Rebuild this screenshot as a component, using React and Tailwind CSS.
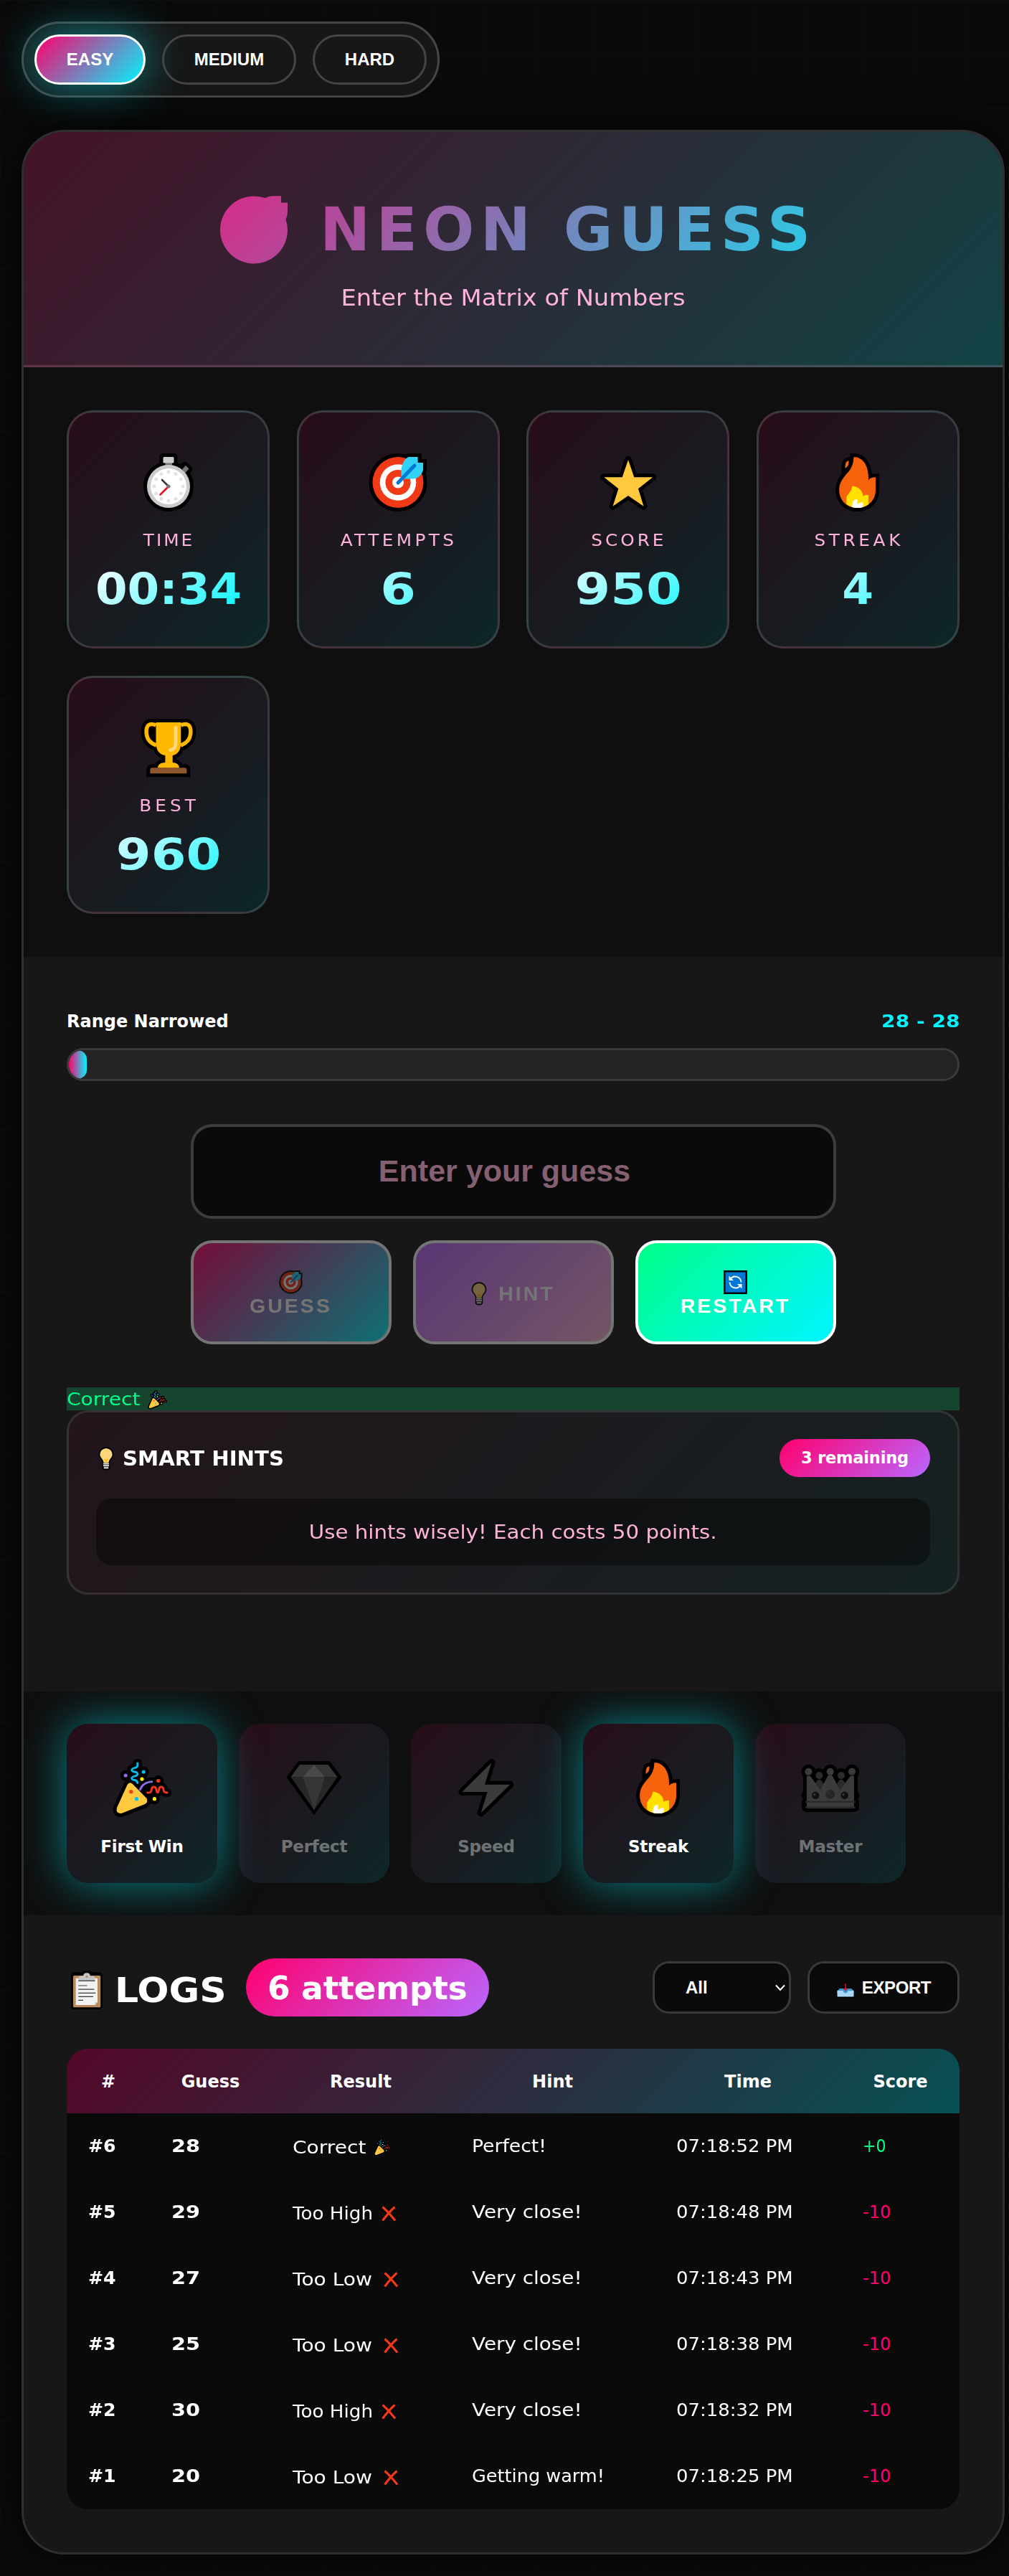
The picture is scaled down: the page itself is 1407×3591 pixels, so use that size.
import React from "react";

function Icon({ size = 82, className = "", outline = 10, shape, children }) {
  return (
    <svg width={size} height={size} viewBox="0 0 82 82" className={`shrink-0 ${className}`}>
      <g fill="#000" stroke="#000" strokeWidth={outline} strokeLinejoin="round" strokeLinecap="round">
        {shape}
      </g>
      {children}
    </svg>
  );
}

function Stopwatch() {
  const dots = Array.from({ length: 12 }, (_, i) => (i * Math.PI) / 6);
  const shape = (
    <>
      <circle cx="41" cy="46" r="30" />
      <path d="M33.5 5h15v9h-15z" />
      <path d="M58 21l6-4 5 5-5 6z" />
    </>
  );
  return (
    <Icon shape={shape}>
      <path d="M36.5 12h9.5v5h-9.5z" fill="#777" />
      <rect x="33.5" y="5" width="15" height="8.5" rx="1.5" fill="#ccc" />
      <path d="M60 22l5-5 4.5 4.5-5.5 6z" fill="#777" />
      <circle cx="41" cy="46" r="30" fill="#cbcbcb" />
      <circle cx="41" cy="46" r="25" fill="#fff" />
      {dots.map((a) => (
        <circle key={a} cx={41 + 20 * Math.sin(a)} cy={46 - 20 * Math.cos(a)} r="2.5" fill="#e3e3e3" />
      ))}
      <path d="M41 46l-9-9" stroke="#3a3a3a" strokeWidth="2.6" strokeLinecap="round" />
      <path d="M41 46L29.5 57.5" stroke="#e81224" strokeWidth="2.6" strokeLinecap="round" />
      <circle cx="41" cy="46" r="2.6" fill="#777" />
    </Icon>
  );
}

const FLIGHT = "M45.4 35.5V24C46 15 51 6 56 5h12.6v8h7.5v10c-2 7-7 12.5-15 12.5z";

function Target({ size, className }) {
  const shape = (
    <>
      <circle cx="41" cy="40.5" r="35.5" />
      <path d={FLIGHT} strokeLinejoin="miter" />
    </>
  );
  return (
    <Icon size={size} className={className} shape={shape}>
      <circle cx="41" cy="40.5" r="35.5" fill="#f03a17" />
      <circle cx="41" cy="40.5" r="25.3" fill="#fff" />
      <circle cx="41" cy="40.5" r="17.6" fill="#f03a17" />
      <circle cx="41" cy="40.5" r="8" fill="#fff" />
      <path d={FLIGHT} fill="#31d2f7" />
      <path d="M41 41L64 17" stroke="#0078d7" strokeWidth="5" strokeLinecap="round" />
    </Icon>
  );
}

function Star() {
  const d = "M41 9L49.3 33.3H75.2L55 49.3 62.5 73.7 41 59 19.5 73.7 27.4 49.3 7.3 33.3H32.7Z";
  return (
    <Icon shape={<path d={d} />}>
      <path d={d} fill="#ffc83d" />
    </Icon>
  );
}

function Fire() {
  const main =
    "M35.4 5C48 5 57 17 56 37.3C58 34.5 61 33.3 66 33.3V51.3C66 65 56 76 40.6 76C25 76 15.2 65 15.2 51.3C15.2 42 19 36 26 28C32 22 35.5 14 35.4 5Z";
  const spark = "M28.4 10.3C24.5 11 23.5 14 23.5 20.7C27 19.5 29 16 28.4 10.3Z";
  const shape = (
    <>
      <path d={main} strokeLinejoin="miter" />
      <path d={spark} strokeLinejoin="miter" />
    </>
  );
  return (
    <Icon shape={shape}>
      <path d={main} fill="#f7630c" />
      <path d={spark} fill="#f7630c" />
      <path
        d="M33.2 45.7C42 46 48 52 48.5 59.7C50.5 58.3 53 58 56 58V71C51.5 74.5 46 76 40.6 76C35 76 29 74 25.3 70.5V61.3C27 56 33 53 33.2 45.7Z"
        fill="#ffe000"
      />
      <path d="M40.6 63.7C36 64 33.2 66 33.2 75C38 76.3 44 76.3 48.5 75V68.3C45 68.3 43 69 40.6 71Z" fill="#fff" />
    </Icon>
  );
}

function Trophy() {
  const cup =
    "M23.5 5H58.3V34C58.3 44 53 50.5 46.7 51V61C52 61 56 64 56 68.5H26C26 64 30 61 36.4 61V51C29 50.5 23.5 44 23.5 34Z";
  const handles = "M23.5 9C12 4 9 12 10.5 22C11.5 30 17 34.5 24 37M58.3 9C70 4 73 12 71.5 22C70.5 30 65 34.5 58 37";
  const base = "M15.4 71q0-2.7 3-2.7h45q3 0 3 2.7v5.3h-51z";
  const shape = (
    <>
      <path d={cup} />
      <path d={handles} strokeWidth="15" />
      <path d={base} strokeLinejoin="miter" />
    </>
  );
  return (
    <Icon shape={shape}>
      <path d={handles} fill="none" stroke="#ffb900" strokeWidth="5.5" />
      <path d={cup} fill="#ffb900" />
      <path d="M51 12.5V34Q51 42.5 43.5 43.5" fill="none" stroke="#ffd679" strokeWidth="5" strokeLinecap="round" />
      <path d={base} fill="#8e562e" />
    </Icon>
  );
}

function Party({ size, className }) {
  const cone = "M20.5 36Q23.5 31 28 35L47.5 55Q50 60 45 63L12 76Q4 76 6 68Z";
  const blue = "M34.7 6v3q0 3-4 3.5q-4 1-4 3t4 2.5q4 .5 4 3t-4 3q-4 1-4 3t4 2.5q4 .5 4 4";
  const red = "M48.5 47C53 47.500 54 46 54.300 43C54.800 37.500 60.500 37.500 61 43C61.300 48 64 48 64.500 43C65 37.500 70.500 37.500 71 43C71.300 46 73 47 76.200 47";
  const arc = "M37.8 44Q42 32 56 31.7";
  const dots = [
    [18.2, 23, "#886ce4"],
    [43.2, 18, "#00bcf2"],
    [41, 28, "#fff100"],
    [63.7, 30.5, "#f03a17"],
    [58.4, 55.7, "#fff100"],
  ];
  const shape = (
    <>
      <path d={cone} />
      <path d={blue} strokeWidth="13" />
      <path d={red} strokeWidth="12" />
      <path d={arc} strokeWidth="12" />
      {dots.map(([x, y]) => (
        <circle key={x} cx={x} cy={y} r="2.5" />
      ))}
    </>
  );
  return (
    <Icon size={size} className={className} shape={shape}>
      <path d={arc} fill="none" stroke="#886ce4" strokeWidth="2.8" />
      <path d={cone} fill="#ffc83d" />
      <path d={blue} fill="none" stroke="#00bcf2" strokeWidth="2.8" strokeLinecap="round" />
      <path d={red} fill="none" stroke="#f03a17" strokeWidth="2.8" strokeLinecap="round" />
      {dots.map(([x, y, c]) => (
        <circle key={x} cx={x} cy={y} r="2.6" fill={c} />
      ))}
      <circle cx="25.8" cy="45.7" r="2.6" fill="#f03a17" />
      <circle cx="33.4" cy="55.7" r="2.6" fill="#00bcf2" />
    </Icon>
  );
}

function Diamond() {
  return (
    <Icon outline={0} shape={<path d="M19.3 3H62.6L79.5 25.3 40.9 78 2.3 25.3Z" />}>
      <path d="M21 8H60.5L73.5 25.3H8.5Z" fill="#363636" />
      <path d="M8.5 25.3H73.5L41 71.5Z" fill="#272727" />
      <path d="M41 8L25.5 25.3H56Z" fill="#4a4a4a" />
      <path d="M25.5 25.3H56L41 71.5Z" fill="#363636" />
    </Icon>
  );
}

function Bolt() {
  const d = "M48.4 5.3L39 35.7H74.3L33.7 75.3 42.6 46H7.4Z";
  return (
    <Icon shape={<path d={d} />}>
      <path d={d} fill="#3b3b3b" />
    </Icon>
  );
}

function Crown() {
  const body = "M7.9 69V23.5H12.8L26.8 43.3 38 22.5H43L54.5 43.3 69 23.5H73.9V69Z";
  const shape = (
    <>
      <path d={body} />
      <path d="M20 40L25.4 27 31 40M50 40L56 27 61 40" />
      {[10.4, 40.7, 71].map((x) => (
        <circle key={x} cx={x} cy="17.7" r="5" />
      ))}
      {[25.4, 56].map((x) => (
        <circle key={x} cx={x} cy="23" r="5" />
      ))}
      <path d="M6 60H76V68H6Z" />
      <circle cx="7" cy="51" r="1.5" />
      <circle cx="75" cy="51" r="1.5" />
    </>
  );
  return (
    <Icon shape={shape}>
      {[25.4, 56].map((x) => (
        <g key={x} fill="#2b2b2b">
          <circle cx={x} cy="23" r="5" />
          <path d={`M${x - 6} 35Q${x} 22 ${x + 6} 35L${x} 46Z`} />
        </g>
      ))}
      <path d={body} fill="#3b3b3b" />
      {[10.4, 40.7, 71].map((x) => (
        <circle key={x} cx={x} cy="17.7" r="5" fill="#3b3b3b" />
      ))}
      <path d="M5.5 59.7H76M5.5 67.5H76" stroke="#272727" strokeWidth="2" />
      <circle cx="20.2" cy="50.7" r="5.2" fill="#111" />
      <circle cx="60.7" cy="50.7" r="5.2" fill="#111" />
      <circle cx="40.5" cy="49.2" r="6.4" fill="#262626" />
      <circle cx="18.6" cy="49.6" r="1.4" fill="#444" />
      <circle cx="59" cy="49.6" r="1.4" fill="#444" />
      <circle cx="38.6" cy="47.6" r="1.8" fill="#2f2f2f" />
    </Icon>
  );
}

function Bulb({ className = "" }) {
  return (
    <svg width="22" height="33" viewBox="0 0 22 33" className={`shrink-0 ${className}`}>
      <path d="M11 0A10.5 10.5 0 0 1 21.5 10.5C21.5 15.5 16.5 17.5 16.3 22V29.5Q16 32.5 11 32.5T5.7 29.5V22C5.5 17.5.5 15.5.5 10.5A10.5 10.5 0 0 1 11 0Z" fill="#000" />
      <path d="M11 2A8.7 8.7 0 0 1 19.7 10.7C19.5 15 15 17 14.4 22H7.6C7 17 2.5 15 2.3 10.7A8.7 8.7 0 0 1 11 2Z" fill="#ffd67a" />
      <path d="M8.5 16.5L10.3 18.5V22.5M13.5 16.5L11.7 18.5V22.5" stroke="#ffb900" strokeWidth="1.3" fill="none" />
      <path d="M7.7 23.5H14.3M7.7 26.3H14.3M8.5 29.2H13.5" stroke="#e6e6e6" strokeWidth="1.9" strokeLinecap="round" />
    </svg>
  );
}

function Refresh() {
  return (
    <svg width="33" height="33" viewBox="0 0 33 33">
      <path d="M0 0H33V33H0Z" fill="#000" />
      <path d="M2.500 2.500H30.500V30.500H2.500Z" fill="#0078d7" />
      <g fill="none" stroke="#fff" strokeWidth="1.800">
        <path d="M24.5 16.500A8.300 8.300 0 0 0 9.500 12" />
        <path d="M8.5 16.500A8.300 8.300 0 0 0 23.5 21" />
      </g>
      <path d="M7.500 7.500V14H14Z" fill="#fff" />
      <path d="M25.500 25.500V19H19Z" fill="#fff" />
    </svg>
  );
}

function Clipboard() {
  return (
    <svg width="44" height="54" viewBox="0 0 44 54" className="shrink-0">
      <path d="M4 2.5H14.5Q17 0 22 0T29.5 2.5H40Q44 3 44 7V50Q44 54 40 54H4Q0 54 0 50V7Q0 3 4 2.5Z" fill="#000" />
      <rect x="3" y="7" width="38.2" height="44.3" rx="1.5" fill="#ba8c5d" />
      <path d="M6.7 10.7H37V44L33.5 48H6.7Z" fill="#f2f2f2" />
      <path d="M37 44H33.5V48Z" fill="#c8c8c8" />
      <path d="M10.3 10Q10.3 8 13 7.7H17Q17.5 3.3 22 3.3T27 7.7H31Q33.5 8 33.5 10V14H10.3Z" fill="#c4c4c4" />
      <circle cx="22" cy="8.5" r="1.7" fill="#ba8c5d" />
      <path d="M10.3 14.3H33.5M10.3 21H22.5M10.3 26.2H32.5M10.3 31.4H34.3M10.3 36.4H31M10.3 41.4H17" stroke="#3a3a3a" strokeWidth="1.2" />
    </svg>
  );
}

function Inbox() {
  return (
    <svg width="26" height="22" viewBox="0 0 26 22" className="mt-[6px] shrink-0">
      <path d="M2 9Q7 7 10 7V1H16V7Q20 7 24 9L26 12V21Q25 22 24 22H2Q0 22 0 20V12Z" fill="#000" />
      <path d="M1.5 12L5 9H21L24.5 12V16H1.5Z" fill="#3a96dd" />
      <path d="M1.5 12H9.5Q10.5 15.5 13 15.5T16.5 12H24.5V19.5Q24.5 20.5 23.5 20.5H2.5Q1.5 20.5 1.5 19.5Z" fill="#a9d8f5" />
      <path d="M13 2V11M10.5 9L13 11.5 15.5 9" stroke="#e81224" strokeWidth="1.5" fill="none" />
    </svg>
  );
}

function Cross() {
  return (
    <svg width="23" height="22" viewBox="0 0 23 22" className="shrink-0">
      <path d="M2.5 1.5Q10 8 20 20.5M19.5 1.5Q12 8 2.5 20.5" stroke="#000" strokeWidth="5.5" fill="none" />
      <path d="M2.5 1.5Q10 8 20 20.5M19.5 1.5Q12 8 2.5 20.5" stroke="#f03a17" strokeWidth="3.3" fill="none" />
    </svg>
  );
}

function HeroMark() {
  return (
    <svg width="94" height="95" viewBox="0 0 94 95" className="shrink-0">
      <defs>
        <linearGradient id="hero" x1="0" y1="0" x2="1" y2="1">
          <stop offset="0" stopColor="#d62c88" />
          <stop offset="1" stopColor="#b24a9a" />
        </linearGradient>
      </defs>
      <path
        d="M47 0.5Q55 .5 62.5 3Q68 .3 73 .3H85V9.5H94V22Q94 28 91.5 33Q94 40 94 48A47 47 0 1 1 47 .5Z"
        fill="url(#hero)"
      />
    </svg>
  );
}

const stats = [
  { label: "TIME", value: "00:34", icon: <Stopwatch />, cls: "tracking-[2.7px]", val: "scale-x-[1.07]" },
  { label: "ATTEMPTS", value: "6", icon: <Target />, cls: "tracking-[4px]", val: "scale-x-[1.19]" },
  { label: "SCORE", value: "950", icon: <Star />, cls: "tracking-[3.6px]", val: "scale-x-[1.19]" },
  { label: "STREAK", value: "4", icon: <Fire />, cls: "tracking-[4.2px]", val: "scale-x-[1.05]" },
  { label: "BEST", value: "960", icon: <Trophy />, cls: "tracking-[4.6px]", val: "scale-x-[1.17]" },
];

const badges = [
  { name: "First Win", icon: <Party />, on: true },
  { name: "Perfect", icon: <Diamond />, on: false },
  { name: "Speed", icon: <Bolt />, on: false },
  { name: "Streak", icon: <Fire />, on: true },
  { name: "Master", icon: <Crown />, on: false },
];

const logs = [
  { n: 6, guess: 28, result: "Correct", hint: "Perfect!", time: "07:18:52 PM", score: "+0" },
  { n: 5, guess: 29, result: "Too High", hint: "Very close!", time: "07:18:48 PM", score: "-10" },
  { n: 4, guess: 27, result: "Too Low", hint: "Very close!", time: "07:18:43 PM", score: "-10" },
  { n: 3, guess: 25, result: "Too Low", hint: "Very close!", time: "07:18:38 PM", score: "-10" },
  { n: 2, guess: 30, result: "Too High", hint: "Very close!", time: "07:18:32 PM", score: "-10" },
  { n: 1, guess: 20, result: "Too Low", hint: "Getting warm!", time: "07:18:25 PM", score: "-10" },
];

const hintStretch = {
  "Perfect!": "scale-x-[1.11]",
  "Very close!": "scale-x-[1.16]",
  "Getting warm!": "scale-x-[1.065]",
};

const resultStretch = {
  Correct: "w-[113px] scale-x-[1.17]",
  "Too High": "w-[123px] scale-x-[1.09]",
  "Too Low": "w-[126px] scale-x-[1.17]",
};

const cols = "grid grid-cols-[116px_169px_250px_285px_260px_165px] items-center";
const action =
  "flex h-[145px] w-[280px] items-center justify-center rounded-[30px] border-4 border-white text-[28.5px] leading-[33px] font-bold tracking-[3px] text-white font-['Liberation_Sans',Arial,sans-serif]";

function Difficulty() {
  const base = "h-[70px] rounded-full border-[3px] text-center text-[24px] leading-[64px] font-bold text-white";
  return (
    <nav className="flex h-[106px] w-[583px] items-center gap-[23px] rounded-full border-[3px] border-[#454545] bg-[#171717] pl-[15px] font-['Liberation_Sans',Arial,sans-serif]">
      <button className={`${base} w-[155px] border-white bg-[linear-gradient(135deg,#ff006e,#00f5ff)] shadow-[0_0_60px_rgba(0,245,255,0.5)]`}>
        EASY
      </button>
      <button className={`${base} w-[187px] border-[#454545]`}>MEDIUM</button>
      <button className={`${base} w-[159px] border-[#454545]`}>HARD</button>
    </nav>
  );
}

export default function App() {
  return (
    <div className="h-[3591px] w-[1407px] overflow-hidden bg-[#0a0a0a] bg-[linear-gradient(rgba(0,245,255,0.035)_1px,transparent_1px),linear-gradient(90deg,rgba(255,0,110,0.035)_1px,transparent_1px)] bg-size-[75px_75px] p-[30px] font-['DejaVu_Sans',sans-serif] text-white">
      <Difficulty />

      <main className="mt-[45px] h-[3380px] w-[1371px] overflow-hidden rounded-[60px] border-[3px] border-[#2f2f2f] bg-[#171717] shadow-[0_0_60px_rgba(0,0,0,0.7)]">
        <header className="h-[328px] border-b-[3px] border-white/15 bg-[linear-gradient(135deg,rgba(255,0,110,0.2),rgba(0,245,255,0.2))] px-[45px] pt-[89px] text-center">
          <h1 className="flex items-center gap-[45px] bg-[linear-gradient(135deg,#ff006e,#00f5ff)] bg-clip-text pl-[229px] text-[84px] leading-[95px] font-bold tracking-[8.2px] whitespace-nowrap text-transparent">
            <HeroMark />
            <span>NEON GUESS</span>
          </h1>
          <p className="mt-[27px] scale-x-[1.07] text-[31.5px] leading-[40px] text-[#ffb3d9]">Enter the Matrix of Numbers</p>
        </header>

        <section className="grid h-[822px] grid-cols-4 content-start gap-[37.5px] bg-[#0f0f0f] p-[60px]">
          {stats.map((s) => (
            <div
              key={s.label}
              className="flex h-[332px] flex-col items-center rounded-[37px] border-[3px] border-white/15 bg-[linear-gradient(135deg,rgba(255,0,110,0.1),rgba(0,245,255,0.1))] px-[37.5px] pt-[57px]"
            >
              {s.icon}
              <div className={`mt-[24px] scale-x-110 pl-[2px] text-[22.5px] leading-[30px] text-[#ffb3d9] ${s.cls}`}>{s.label}</div>
              <div
                className={`mt-[23px] w-full bg-[linear-gradient(135deg,#fff,#00f5ff)] bg-clip-text text-center text-[60px] leading-[60px] font-bold text-transparent ${s.val}`}
              >
                {s.value}
              </div>
            </div>
          ))}
        </section>

        <section className="h-[1024px] px-[60px] pt-[75px]">
          <div className="flex justify-between text-[24px] leading-[30px] font-bold">
            <span>Range Narrowed</span>
            <span className="origin-right scale-x-[1.17] text-[#00f5ff]">28 - 28</span>
          </div>
          <div className="mt-[22px] h-[46px] overflow-hidden rounded-[23px] border-[3px] border-[#3a3a3a] bg-[#232323]">
            <div className="h-full w-[2%] rounded-[20px] bg-[linear-gradient(90deg,#ff006e,#00f5ff)]" />
          </div>

          <div className="mx-auto mt-[60px] flex h-[132px] w-[900px] items-center justify-center rounded-[30px] border-4 border-[#3d3d3d] bg-[#0a0a0a] pr-[24px] pb-[2px] font-['Liberation_Sans',Arial,sans-serif] text-[43px] font-bold text-[#855f72]">
            Enter your guess
          </div>

          <div className="mx-auto mt-[30px] flex w-[900px] justify-between">
            <button className={`${action} flex-col bg-[linear-gradient(135deg,#ff006e,#00f5ff)] pt-[4px] opacity-40`}>
              <Target size={33} />
              <span>GUESS</span>
            </button>
            <button className={`${action} gap-[16px] bg-[linear-gradient(135deg,#b967ff,#ffb3d9)] pt-[3px] opacity-40`}>
              <Bulb />
              <span>HINT</span>
            </button>
            <button className={`${action} flex-col bg-[linear-gradient(135deg,#00ff88,#00f5ff)] pt-[4px]`}>
              <Refresh />
              <span>RESTART</span>
            </button>
          </div>

          <div className="mt-[60px] flex h-[32px] items-center bg-[#15452f] pt-[2px] text-[24px] leading-[30px] text-[#00ff88]">
            <span className="w-[113px] origin-left scale-x-[1.17]">Correct</span>
            <Party size={27} />
          </div>

          <div className="h-[257px] rounded-[30px] border-[3px] border-white/10 bg-[linear-gradient(135deg,rgba(255,0,110,0.05),rgba(0,245,255,0.05))] px-[38px] pt-[37px]">
            <div className="flex h-[53px] items-center justify-between font-bold">
              <div className="flex items-center gap-[12px] pt-[2px] pl-[3px]">
                <Bulb />
                <span className="origin-left scale-x-[1.045] text-[28px]">SMART HINTS</span>
              </div>
              <span className="w-[210px] rounded-full bg-[linear-gradient(135deg,#ff006e,#b967ff)] text-center text-[22.5px] leading-[53px] tracking-[-0.2px]">
                3 remaining
              </span>
            </div>
            <div className="mt-[30px] rounded-[22px] bg-black/40 text-center text-[27px] leading-[93px] text-[#ffb3d9]">
              <span className="inline-block scale-x-[1.085]">Use hints wisely! Each costs 50 points.</span>
            </div>
          </div>
        </section>

        <section className="flex h-[312px] gap-[30px] overflow-hidden bg-[#0f0f0f] px-[60px] pt-[45px]">
          {badges.map((b) => (
            <div
              key={b.name}
              className={`flex h-[222px] w-[210px] flex-col items-center rounded-[30px] bg-[linear-gradient(135deg,rgba(255,0,110,0.1),rgba(0,245,255,0.1))] pt-[49px] ${
                b.on ? "shadow-[0_0_60px_rgba(0,245,255,0.5)]" : ""
              }`}
            >
              {b.icon}
              <span className={`mt-[25px] text-[23px] leading-[30px] font-bold tracking-[-0.2px] ${b.on ? "text-white" : "text-white/40"}`}>
                {b.name}
              </span>
            </div>
          ))}
        </section>

        <section className="px-[60px] pt-[60px]">
          <div className="flex h-[81px] items-center">
            <div className="ml-[6px] flex items-center pt-[7px]">
              <Clipboard />
              <span className="ml-[17px] w-[183px] origin-left scale-x-[1.085] text-[48px] leading-[54px] font-bold">LOGS</span>
            </div>
            <span className="w-[339px] rounded-full bg-[linear-gradient(135deg,#ff006e,#b967ff)] pt-[3px] text-center text-[45px] leading-[78px] font-bold">
              6 attempts
            </span>
            <div className="ml-auto flex gap-[23px] font-['Liberation_Sans',Arial,sans-serif] text-[24px] font-bold">
              <div className="flex h-[73px] w-[193px] items-center justify-between rounded-[23px] border-[3px] border-[#3a3a3a] bg-[#0a0a0a] pr-[5px] pl-[43px]">
                <span>All</span>
                <svg width="14" height="10" viewBox="0 0 14 10">
                  <path d="M1 1.5L7 8 13 1.5" stroke="#fff" strokeWidth="2" fill="none" />
                </svg>
              </div>
              <button className="flex h-[73px] w-[212px] items-center justify-center gap-[10px] rounded-[23px] border-[3px] border-[#3a3a3a] bg-[#0a0a0a]">
                <Inbox />
                <span className="tracking-[-0.4px]">EXPORT</span>
              </button>
            </div>
          </div>

          <div className="mt-[45px] overflow-hidden rounded-[30px] bg-[#0a0a0a] text-[24px]">
            <div className={`${cols} h-[90px] bg-[linear-gradient(135deg,rgba(255,0,110,0.3),rgba(0,245,255,0.3))] pt-[2px] text-center font-bold`}>
              <span>#</span>
              <span>Guess</span>
              <span>Result</span>
              <span>Hint</span>
              <span>Time</span>
              <span>Score</span>
            </div>
            {logs.map((r) => (
              <div key={r.n} className={`${cols} h-[92px] *:ml-[30px]`}>
                <span className="origin-left scale-x-[1.05] font-bold">#{r.n}</span>
                <span className="origin-left scale-x-[1.2] font-bold">{r.guess}</span>
                <div className="flex items-center pt-[3px]">
                  <span className={`origin-left ${resultStretch[r.result]}`}>{r.result}</span>
                  {r.result === "Correct" ? <Party size={25} /> : <Cross />}
                </div>
                <span className={`origin-left ${hintStretch[r.hint]}`}>{r.hint}</span>
                <span className="origin-left scale-x-[1.08] whitespace-nowrap">{r.time}</span>
                <span className={`origin-left ${r.score === "+0" ? "scale-x-[0.92] text-[#00ff88]" : "text-[#ff006e]"}`}>{r.score}</span>
              </div>
            ))}
          </div>
        </section>
      </main>
    </div>
  );
}
